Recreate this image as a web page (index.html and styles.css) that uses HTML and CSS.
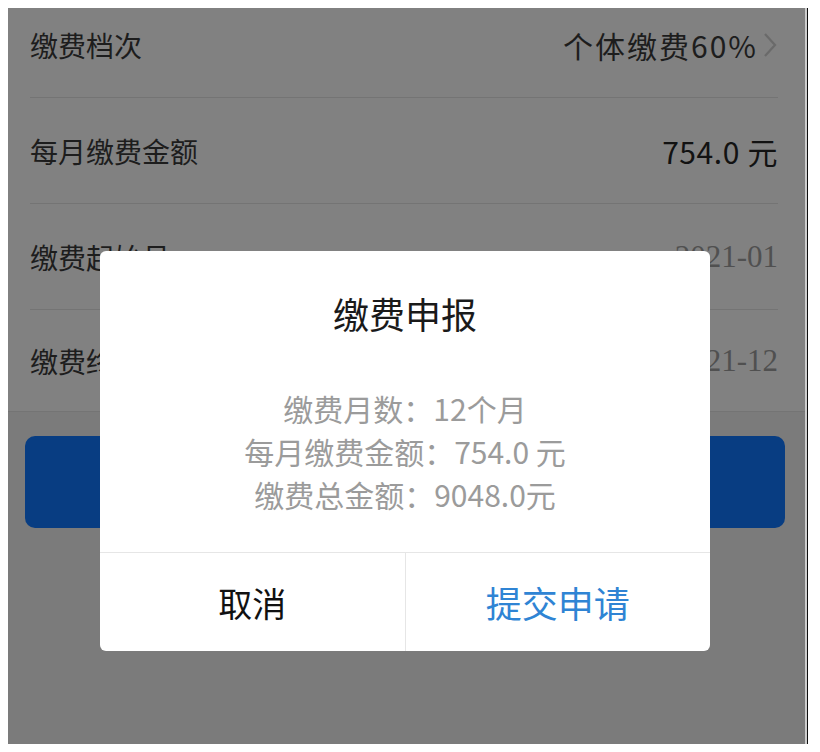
FILE: index.html
```html
<!DOCTYPE html>
<html>
<head>
  <title>缴费申报</title>
  <meta charset="UTF-8" />
  <link rel="stylesheet" href="styles.css">
</head>
<body>
  <div class="device">
    <div class="screen">

      <!-- Payment details list -->
      <div class="list">
        <div class="row">
          <span class="label">缴费档次</span>
          <span class="value level">个体缴费60%
            <svg class="chevron" width="16" height="26" viewBox="0 0 16 26">
              <polyline points="3,2 13,13 3,24" fill="none" stroke="#6a6a6a" stroke-width="2.2" />
            </svg>
          </span>
        </div>
        <div class="row">
          <span class="label">每月缴费金额</span>
          <span class="value money">754.0 元</span>
        </div>
        <div class="row">
          <span class="label">缴费起始月</span>
          <span class="value date">2021-01</span>
        </div>
        <div class="row last">
          <span class="label">缴费终止月</span>
          <span class="value date">2021-12</span>
        </div>
      </div>

      <button class="submit-btn" type="button" aria-label="确认缴费"></button>

      <!-- Confirm dialog -->
      <div class="dialog">
        <h2 class="dialog-title">缴费申报</h2>
        <div class="dialog-body">
          <p>缴费月数：12个月</p>
          <p>每月缴费金额：754.0 元</p>
          <p>缴费总金额：9048.0元</p>
        </div>
        <div class="dialog-actions">
          <button class="action cancel" type="button">取消</button>
          <button class="action confirm" type="button">提交申请</button>
        </div>
      </div>

    </div>
  </div>
</body>
</html>
```

FILE: styles.css
```css
body {
  margin: 8px;
  background: #fff;
  font-family: "Noto Sans CJK SC", "Noto Sans", sans-serif;
}

.device {
  width: 799px;
  border-right: 1px solid #111;
}

.screen {
  position: relative;
  width: 797px;
  height: 736px;
  overflow: hidden;
  background: #7b7b7b;
  border-right: 2px solid #cdcdcd;
}

.list {
  margin-top: -16px;
  background: #818181;
  border-bottom: 1px solid #747474;
}

.row {
  display: flex;
  align-items: center;
  justify-content: space-between;
  height: 105px;
  margin: 0 27px 0 22px;
  border-bottom: 1px solid #747474;
}

.row.last {
  height: 101px;
  border-bottom: none;
}

.label {
  font-size: 28px;
  color: #1d1d1d;
}

.value {
  display: flex;
  align-items: center;
  font-size: 30px;
  letter-spacing: 0.6px;
  color: #1d1d1d;
}

.value.level {
  letter-spacing: 2px;
}

.value.money {
  color: #121212;
}

.value.date {
  font-family: "Liberation Serif", serif;
  font-size: 31px;
  letter-spacing: 0;
  color: #505050;
}

.chevron {
  margin-left: 4px;
}

.submit-btn {
  display: block;
  width: 760px;
  height: 92px;
  margin: 24px 0 0 17px;
  border: none;
  border-radius: 10px;
  background: #083d82;
}

.dialog {
  position: absolute;
  left: 92px;
  top: 243px;
  width: 610px;
  height: 400px;
  display: flex;
  flex-direction: column;
  background: #fff;
  border-radius: 6px;
}

.dialog-title {
  margin: 0;
  padding-top: 44px;
  font-size: 36px;
  line-height: 36px;
  font-weight: 400;
  color: #1a1a1a;
  text-align: center;
}

.dialog-body {
  flex: 1;
  padding-top: 56px;
  text-align: center;
}

.dialog-body p {
  margin: 0;
  font-size: 30px;
  line-height: 43px;
  color: #9b9b9b;
}

.dialog-actions {
  display: flex;
  height: 98px;
  border-top: 1px solid #e6e6e6;
}

.action {
  flex: 1;
  border: none;
  background: none;
  font-family: inherit;
  padding: 0;
}

.action.cancel {
  font-size: 34px;
  color: #111;
  border-right: 1px solid #e6e6e6;
}

.action.confirm {
  font-size: 36px;
  color: #2f84d4;
}
```
